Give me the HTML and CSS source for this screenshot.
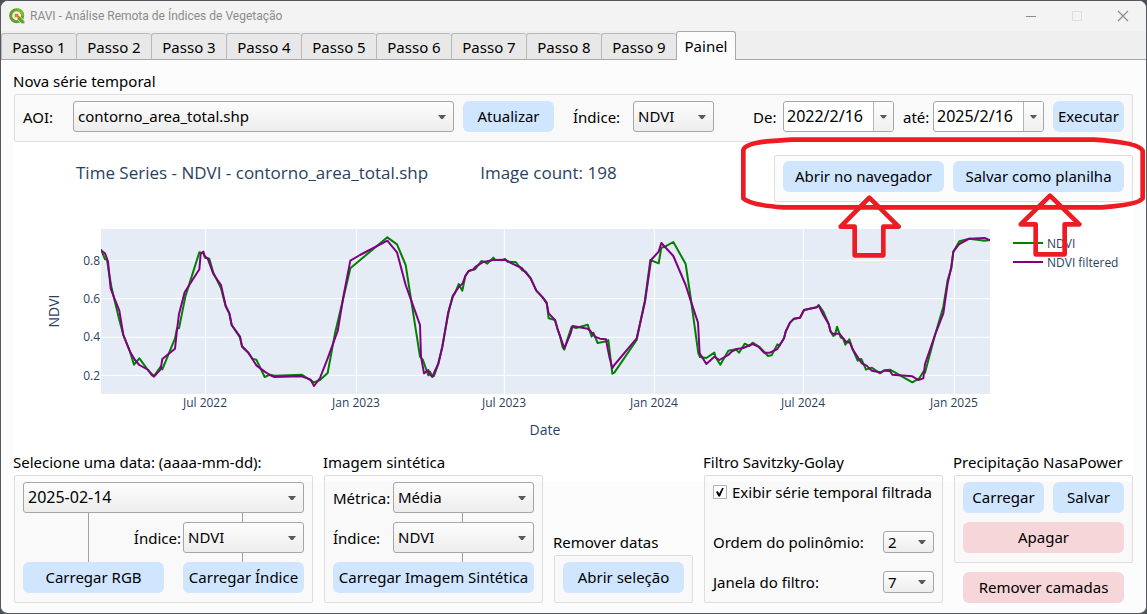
FILE: index.html
```html
<!DOCTYPE html>
<html lang="pt-BR">
<head>
<meta charset="utf-8">
<title>RAVI - Análise Remota de Índices de Vegetação</title>
<link rel="stylesheet" href="styles.css">
</head>
<body>
<div class="window">
  <header class="titlebar">
    <svg class="logo" viewBox="0 0 48 48" aria-hidden="true">
      <circle cx="23" cy="23" r="18" fill="none" stroke="#62a22c" stroke-width="9"/>
      <path d="M23 5A18 18 0 0 1 41 23" fill="none" stroke="#84b52f" stroke-width="9"/>
      <path d="M25 25h8l14 15v7h-9L25 34z" fill="#62a22c" stroke="#f3f3f3" stroke-width="2"/>
      <path d="M17 17h12l-2 4 5 5-5 5-5-5-5 3z" fill="#ee7913"/>
    </svg>
    <h1 class="title">RAVI - Análise Remota de Índices de Vegetação</h1>
    <button class="caption" type="button" aria-label="Minimizar"><svg viewBox="0 0 12 12"><path d="M1 6.500h10" stroke="#8b8b8b"/></svg></button>
    <button class="caption" type="button" aria-label="Maximizar" disabled><svg viewBox="0 0 12 12"><rect x="1.500" y="1.500" width="9" height="9" fill="none" stroke="#dedede"/></svg></button>
    <button class="caption" type="button" aria-label="Fechar"><svg viewBox="0 0 12 12"><path d="M1 1l10 10M11 1L1 11" stroke="#8b8b8b" stroke-width="1.200"/></svg></button>
  </header>

  <nav class="tabs" role="tablist">
    <button class="tab" role="tab" type="button">Passo 1</button>
    <button class="tab" role="tab" type="button">Passo 2</button>
    <button class="tab" role="tab" type="button">Passo 3</button>
    <button class="tab" role="tab" type="button">Passo 4</button>
    <button class="tab" role="tab" type="button">Passo 5</button>
    <button class="tab" role="tab" type="button">Passo 6</button>
    <button class="tab" role="tab" type="button">Passo 7</button>
    <button class="tab" role="tab" type="button">Passo 8</button>
    <button class="tab" role="tab" type="button">Passo 9</button>
    <button class="tab tab-active" role="tab" type="button" aria-selected="true">Painel</button>
  </nav>

  <main class="page">
    <section>
      <h2 class="heading">Nova série temporal</h2>
      <div class="box query">
        <label class="label-aoi" for="aoi">AOI:</label>
        <span class="select select-aoi"><select id="aoi"><option>contorno_area_total.shp</option></select></span>
        <button class="btn btn-update" type="button">Atualizar</button>
        <label class="label-index" for="index-series">Índice:</label>
        <span class="select select-index"><select id="index-series"><option>NDVI</option></select></span>
        <div class="date-field date-from">
          <label for="from">De:</label>
          <span class="date"><input id="from" type="text" value="2022/2/16"><button type="button" aria-label="Abrir calendário"></button></span>
        </div>
        <div class="date-field">
          <label for="to">até:</label>
          <span class="date"><input id="to" type="text" value="2025/2/16"><button type="button" aria-label="Abrir calendário"></button></span>
        </div>
        <button class="btn btn-run" type="button">Executar</button>
      </div>
    </section>

    <section class="series">
      <div class="series-head">
        <h3 class="chart-title">Time Series - NDVI - contorno_area_total.shp</h3>
        <p class="chart-count">Image count: 198</p>
        <div class="box export">
          <button class="btn btn-browser" type="button">Abrir no navegador</button>
          <button class="btn btn-sheet" type="button">Salvar como planilha</button>
          <svg class="marks" viewBox="0 0 1281 450" aria-hidden="true">
            <path d="M70 60Q75 42 140 34L215 29H1122Q1258 38 1268 62V205Q1255 225 1145 232H190Q90 225 70 205Z"/>
            <path d="M448 203L536 290H490V376H404V290H362Z"/>
            <path d="M990 197L1078 283H1034V373H947V283H902Z"/>
          </svg>
        </div>
      </div>
      <svg class="chart" viewBox="13 202 1120 250" role="img" aria-label="Série temporal NDVI">
        <svg x="101" y="229" width="889" height="165" viewBox="183 27 2667 495">
          <rect x="183" y="27" width="2667" height="495" fill="#e5ecf6"/>
          <path class="grid" d="M497 27V522M949 27V522M1393 27V522M1843 27V522M2290 27V522M2743 27V522M183 121H2850M183 236H2850M183 352H2850M183 466H2850"/>
          <polyline class="line raw" points="183,88 195,118 201,118 208,165 215,205 238,300 250,345 270,395 282,434 298,415 325,452 342,468 362,440 367,448 405,355 411,325 417,325 436,230 478,97 490,100 495,113 508,116 520,158 543,205 557,258 568,280 575,315 600,352 606,378 625,398 638,417 649,419 674,471 690,464 703,467 785,464 822,487 840,480 863,459 885,340 911,230 931,145 990,95 1042,52 1071,73 1097,135 1115,250 1140,410 1148,418 1165,466 1170,455 1177,470 1182,468 1195,432 1207,380 1225,280 1238,228 1244,222 1256,192 1267,212 1276,168 1286,153 1305,148 1324,123 1332,125 1342,131 1360,113 1365,119 1385,121 1395,117 1402,125 1427,126 1447,151 1457,155 1472,175 1489,212 1508,232 1520,247 1526,295 1545,300 1552,325 1560,348 1568,382 1573,389 1581,362 1595,320 1608,324 1643,314 1655,350 1660,338 1673,369 1700,364 1705,360 1717,461 1723,458 1790,360 1815,240 1831,120 1856,130 1864,83 1875,80 1900,66 1937,132 1953,240 1975,400 1980,411 1999,414 2023,398 2027,412 2041,434 2065,392 2088,388 2097,398 2114,371 2128,378 2138,368 2160,382 2184,408 2195,406 2212,373 2218,377 2232,355 2237,335 2250,308 2262,296 2280,293 2292,270 2330,262 2336,255 2350,275 2366,312 2372,335 2380,348 2385,345 2391,320 2402,352 2410,357 2416,374 2428,358 2438,388 2453,422 2464,417 2478,449 2495,443 2520,460 2532,451 2550,449 2617,487 2638,475 2650,455 2655,458 2685,345 2710,260 2723,180 2734,145 2740,95 2758,64 2788,56 2834,62 2850,60"/>
          <polyline class="line filtered" points="183,92 195,100 204,125 212,205 225,240 238,272 250,345 270,395 285,420 298,435 325,450 335,465 342,470 362,448 367,417 405,386 411,330 417,282 434,217 478,148 482,102 490,95 495,110 503,115 520,162 543,195 557,258 568,280 575,315 600,350 606,380 625,398 649,436 674,455 690,465 703,471 785,469 812,479 822,498 840,474 863,415 893,333 911,225 931,122 960,105 1042,62 1071,97 1097,195 1115,245 1140,315 1143,410 1152,460 1165,450 1170,464 1177,470 1195,430 1207,380 1225,275 1240,225 1255,203 1268,190 1276,168 1286,153 1300,148 1307,140 1330,126 1360,120 1395,119 1415,130 1445,144 1472,175 1489,212 1508,232 1520,250 1526,280 1545,300 1552,325 1573,385 1592,340 1598,318 1643,326 1652,334 1665,350 1680,356 1698,358 1703,385 1708,410 1717,445 1723,435 1790,355 1815,245 1833,120 1856,95 1864,69 1900,108 1937,195 1953,245 1974,308 1979,400 1999,432 2023,410 2038,420 2065,405 2075,395 2090,387 2110,384 2138,372 2155,380 2172,398 2190,398 2212,387 2232,355 2237,335 2250,308 2262,296 2280,293 2292,270 2330,262 2336,257 2350,285 2366,312 2372,335 2378,341 2398,341 2418,365 2430,368 2438,388 2465,430 2480,437 2495,452 2520,457 2535,452 2550,453 2557,464 2617,469 2635,480 2650,475 2655,432 2685,345 2710,280 2723,190 2734,140 2740,95 2758,72 2788,56 2834,54 2850,61"/>
        </svg>
        <g class="tick tick-y"><text x="100" y="265">0.8</text><text x="100" y="303">0.6</text><text x="100" y="341">0.4</text><text x="100" y="380">0.2</text></g>
        <g class="tick tick-x"><text x="205" y="407">Jul 2022</text><text x="356" y="407">Jan 2023</text><text x="504" y="407">Jul 2023</text><text x="654" y="407">Jan 2024</text><text x="803" y="407">Jul 2024</text><text x="954" y="407">Jan 2025</text></g>
        <text class="axis" x="545" y="435">Date</text>
        <text class="axis" transform="translate(59 311) rotate(-90)">NDVI</text>
        <path class="legend raw" d="M1013 243H1043"/>
        <path class="legend filtered" d="M1013 262H1043"/>
        <g class="tick"><text x="1047" y="248">NDVI</text><text x="1047" y="267">NDVI filtered</text></g>
      </svg>
    </section>

    <div class="tools">
      <section>
        <h2 class="heading"><label for="date">Selecione uma data: (aaaa-mm-dd):</label></h2>
        <div class="box date-grid">
          <span class="select select-date span-all"><select id="date"><option>2025-02-14</option></select></span>
          <label class="label-end" for="index-date">Índice:</label>
          <span class="select link-up"><select id="index-date"><option>NDVI</option></select></span>
          <span class="cell link-up link-long"><button class="btn" type="button">Carregar RGB</button></span>
          <span class="cell cell-last link-up"><button class="btn" type="button">Carregar Índice</button></span>
        </div>
      </section>

      <section>
        <h2 class="heading">Imagem sintética</h2>
        <div class="box synth-grid">
          <label for="metric">Métrica:</label>
          <span class="select"><select id="metric"><option>Média</option></select></span>
          <label for="index-synth">Índice:</label>
          <span class="select link-up"><select id="index-synth"><option>NDVI</option></select></span>
          <span class="cell span-all link-up link-right"><button class="btn" type="button">Carregar Imagem Sintética</button></span>
        </div>
      </section>

      <section class="at-end">
        <h2 class="heading">Remover datas</h2>
        <div class="box stack"><button class="btn" type="button">Abrir seleção</button></div>
      </section>

      <section class="filter">
        <h2 class="heading">Filtro Savitzky-Golay</h2>
        <div class="box filter-box">
          <label class="check"><input type="checkbox" checked>Exibir série temporal filtrada</label>
          <div class="filter-row"><label for="order">Ordem do polinômio:</label><span class="select select-small"><select id="order"><option>2</option></select></span></div>
          <div class="filter-row"><label for="span">Janela do filtro:</label><span class="select select-small"><select id="span"><option>7</option></select></span></div>
        </div>
      </section>

      <section>
        <h2 class="heading">Precipitação NasaPower</h2>
        <div class="box rain-grid">
          <button class="btn" type="button">Carregar</button>
          <button class="btn" type="button">Salvar</button>
          <button class="btn btn-danger span-all" type="button">Apagar</button>
        </div>
        <div class="layers"><button class="btn btn-danger" type="button">Remover camadas</button></div>
      </section>
    </div>
  </main>
</div>
</body>
</html>
```
FILE: styles.css
```css
* { box-sizing: border-box; }

body {
  margin: 0;
  background: #4b5058;
  color: #000;
  font: 16px/20px "Noto Sans", "Open Sans", sans-serif;
}

h1, h2, h3, p { margin: 0; font-weight: 400; }

button, select, input { font: inherit; color: inherit; }

.window {
  display: flex;
  flex-direction: column;
  min-height: 100vh;
  border: 1px solid #55585e;
  border-bottom-width: 2px;
  border-radius: 8px;
  overflow: hidden;
  background: #fcfcfc;
}

/* Title bar */
.titlebar {
  display: flex;
  align-items: center;
  height: 30px;
  padding: 0 0 0 8px;
  background: #f3f3f3;
}
.logo { width: 16px; height: 16px; }
.title {
  flex: 1;
  margin-left: 5px;
  color: #8b8b8b;
  font: 12px/16px Roboto, sans-serif;
}
.caption {
  display: flex;
  align-items: center;
  justify-content: center;
  width: 46px;
  height: 30px;
  padding: 0;
  border: 0;
  background: none;
}
.caption svg { width: 12px; height: 12px; }

/* Tabs */
.tabs {
  display: flex;
  align-items: flex-end;
  height: 29px;
  background: linear-gradient(#a8a8a8, #a8a8a8) bottom / 100% 1px no-repeat #efefef;
}
.tab {
  width: 75px;
  height: 27px;
  padding: 0;
  border: 1px solid #b8b8b8;
  border-right: 0;
  border-bottom-color: #a8a8a8;
  border-radius: 3px 3px 0 0;
  background: #e8e8e8;
  font-size: 15px;
}
.tab-active {
  width: 60px;
  height: 29px;
  border: 1px solid #a8a8a8;
  border-bottom: 0;
  background: #fcfcfc;
}

/* Page */
.page {
  display: flex;
  flex: 1;
  flex-direction: column;
  padding: 11px 13px 10px 12px;
}
.heading { margin-bottom: 3px; font-size: 15px; line-height: 20px; }
.page label { font-size: 15px; white-space: nowrap; }
.box {
  margin-left: 1px;
  padding: 6px 8px 9px;
  border: 1px solid #dedede;
  border-radius: 2px;
  background: rgba(0, 0, 0, .012);
}

.btn {
  height: 31px;
  padding: 0 4px 1px;
  border: 0;
  border-radius: 6px;
  background: #d0e6ff;
  font-size: 15px;
  white-space: nowrap;
}
.btn-danger { background: #f7d6d9; }

.select { position: relative; display: block; min-width: 0; }
.select select {
  display: block;
  width: 100%;
  height: 31px;
  padding: 0 20px 1px 4px;
  border: 1px solid #a6a6a6;
  border-radius: 3px;
  background: linear-gradient(#fdfdfd, #ededed);
  font-size: 15px;
  appearance: none;
}
.select::after,
.date button::after {
  content: "";
  width: 8px;
  height: 4px;
  background: #5a5a5a;
  clip-path: polygon(0 0, 100% 0, 60% 100%, 40% 100%);
}
.select::after {
  position: absolute;
  top: 14px;
  right: 8px;
  pointer-events: none;
}
.select-date select { font-size: 16px; }

/* Query row */
.query { display: flex; align-items: center; gap: 9px; }
.label-aoi { width: 41px; }
.select-aoi { flex: 1; }
.btn-update { width: 91px; }
.label-index { width: 51px; margin-left: 10px; }
.select-index { width: 81px; }
.date-field { display: flex; align-items: center; }
.date-field label { width: 30px; }
.date-from { margin-left: 30px; }
.date {
  display: flex;
  width: 111px;
  height: 31px;
  border: 1px solid #a6a6a6;
  border-radius: 3px;
  background: #fff;
  overflow: hidden;
}
.date input {
  flex: 1;
  min-width: 0;
  padding: 0 0 1px 3px;
  border: 0;
  background: none;
  font-size: 16px;
}
.date button {
  display: flex;
  align-items: center;
  justify-content: center;
  width: 20px;
  padding: 0;
  border: 0;
  border-left: 1px solid #b4b4b4;
  background: linear-gradient(#fdfdfd, #f0f0f0);
}
.btn-run { width: 71px; }

/* Time series */
.series { background: #fff; }
.series-head {
  display: flex;
  align-items: flex-start;
  padding: 13px 0 0 63px;
  color: #2a3f5f;
}
.chart-title, .chart-count {
  padding-top: 6px;
  font: 17px/24px "Open Sans", sans-serif;
}
.chart-count { margin-left: 52px; }
.export {
  position: relative;
  display: flex;
  gap: 9px;
  margin-left: auto;
  padding-top: 5px;
  color: #000;
}
.btn-browser { width: 161px; }
.btn-sheet { width: 171px; }
.marks {
  position: absolute;
  top: -26px;
  left: -55px;
  z-index: 2;
  width: 427px;
  height: 150px;
  fill: none;
  stroke: #ed1c24;
  stroke-width: 14;
  stroke-linejoin: round;
  pointer-events: none;
}
.chart { display: block; width: 100%; }
.chart text { fill: #2a3f5f; font-family: "Open Sans", sans-serif; }
.grid { fill: none; stroke: #fff; stroke-width: 3; }
.line { fill: none; stroke-width: 6; stroke-linejoin: round; }
.legend { stroke-width: 2; }
.raw { stroke: #008000; }
.filtered { stroke: #800080; }
.tick { font-size: 12px; }
.tick-x, .axis { text-anchor: middle; }
.tick-y { text-anchor: end; }
.axis { font-size: 14px; }

/* Tool groups */
.tools {
  display: grid;
  grid-template-columns: 300fr 220fr 140fr 240fr 180fr;
  gap: 10px;
  background: linear-gradient(#fff, #fff) top / 100% 30px no-repeat;
}
.tools > section { min-width: 0; }
.at-end { align-self: end; }
.span-all { grid-column: 1 / -1; }
.cell { display: grid; }
.stack { display: grid; }

.date-grid {
  display: grid;
  grid-template-columns: 141fr 19px 121fr;
  align-items: center;
  row-gap: 9px;
}
.label-end { grid-column: 1 / 3; justify-self: end; padding-right: 2px; }
.cell-last { grid-column: 3; }

.synth-grid {
  display: grid;
  grid-template-columns: 60px 1fr;
  align-items: center;
  row-gap: 9px;
}

/* Connector lines between chained controls */
.link-up { position: relative; }
.link-up::before {
  content: "";
  position: absolute;
  bottom: 100%;
  left: 49%;
  width: 1px;
  height: 9px;
  background: #a0a0a0;
}
.link-long::before { left: 46%; height: 49px; }
.link-right::before { left: 64%; }

.filter { display: flex; flex-direction: column; }
.filter-box {
  display: flex;
  flex: 1;
  flex-direction: column;
  gap: 18px;
}
.check { display: flex; align-items: center; margin-bottom: auto; }
.check input {
  display: grid;
  place-items: center;
  width: 14px;
  height: 14px;
  margin: 0 5px 0 0;
  border: 1px solid #b4b4b4;
  background: #fff;
  appearance: none;
}
.check input:checked::after {
  content: "";
  width: 8px;
  height: 9px;
  background: #000;
  clip-path: polygon(0 50%, 20% 40%, 40% 68%, 80% 0, 100% 0, 50% 100%, 30% 100%);
}
.filter-row { display: flex; align-items: center; justify-content: space-between; }
.select-small { width: 51px; }
.select-small select { height: 22px; }
.select-small::after { top: 9px; }

.rain-grid {
  display: grid;
  grid-template-columns: 81fr 71fr;
  gap: 9px;
}
.layers { display: grid; padding: 9px 9px 0 10px; }
```
